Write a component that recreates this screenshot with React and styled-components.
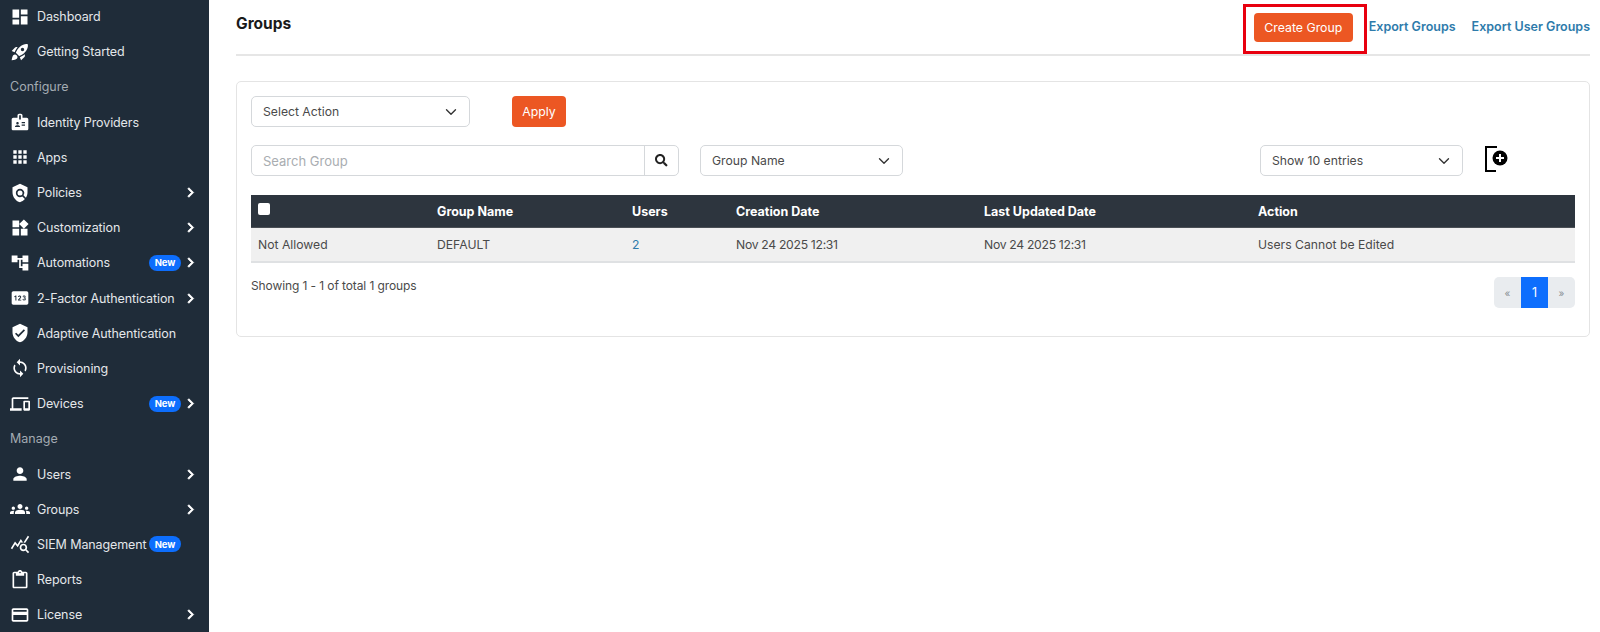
import styled, { createGlobalStyle } from "styled-components";
import {
  MdDashboard, MdRocketLaunch, MdBadge, MdApps, MdPolicy, MdWidgets,
  MdAccountTree, MdPin, MdVerifiedUser, MdSync, MdDevices, MdPerson, MdGroups,
  MdQueryStats, MdOutlineContentPaste, MdOutlineCreditCard, MdChevronRight,
} from "react-icons/md";
import { FaSearch } from "react-icons/fa";

const GlobalStyle = createGlobalStyle`
  html, body { margin: 0; padding: 0; height: 100%; background: #fff; overflow: hidden; }
  body { font-family: "Inter", "Noto Sans", sans-serif; font-size: 12.5px; color: #4a4a4a; }
`;

const Page = styled.div`
  display: flex;
  height: 632px;
  overflow: hidden;
`;

const Sidebar = styled.aside`
  flex: 0 0 209px;
  background: #1f2c39;
  overflow: hidden;
`;

const NavList = styled.nav`
  margin-top: -1px;
  display: flex;
  flex-direction: column;
`;

const NavRow = styled.div`
  height: 35.2px;
  display: flex;
  align-items: center;
  padding: 0 9px 0 10px;
  color: #e4e7ea;
  font-size: 12.5px;
  letter-spacing: -0.1px;
  white-space: nowrap;
`;

const NavIcon = styled.span`
  flex: 0 0 27px;
  display: flex;
  align-items: center;
  color: #fff;
  font-size: 20px;
`;

const NavLabel = styled.span`
  flex: 1;
`;

const SectionLabel = styled.div`
  height: 35.2px;
  display: flex;
  align-items: center;
  padding-left: 10px;
  color: #a3abb2;
  font-size: 12.5px;
`;

const NewBadge = styled.span`
  width: 32px;
  height: 16px;
  border-radius: 8px;
  background: #0d6efd;
  color: #fff;
  font-size: 9.5px;
  font-weight: 700;
  display: flex;
  align-items: center;
  justify-content: center;
`;

const Chevron = styled.span`
  flex: 0 0 19px;
  display: flex;
  justify-content: center;
  color: #fff;
  font-size: 19px;
  svg path:last-child { stroke: #fff; stroke-width: 1; }
`;

const Main = styled.main`
  flex: 1;
  min-width: 0;
  padding: 0 10px 0 27px;
`;

const Header = styled.header`
  height: 56px;
  box-sizing: border-box;
  border-bottom: 2px solid #e6e6e6;
  display: flex;
  align-items: flex-start;
  padding-top: 4px;
`;

const Title = styled.h1`
  margin: 10px auto 0 0;
  font-size: 15.5px;
  font-weight: 700;
  color: #1a1a1a;
`;

const Highlight = styled.div`
  width: 124px;
  height: 50px;
  box-sizing: border-box;
  border: 3px solid #e8000f;
  padding: 6px 0 0 8px;
`;

const OrangeButton = styled.button`
  border: 0;
  border-radius: 4px;
  background: #ec5723;
  color: #fff;
  font: inherit;
  font-size: 12.3px;
  height: ${(p) => p.$h}px;
  width: ${(p) => p.$w}px;
  padding: 0;
`;

const ExportLink = styled.a`
  margin: 15px 0 0 ${(p) => p.$gap}px;
  color: #2e7bab;
  font-size: 12.5px;
  font-weight: 600;
  white-space: nowrap;
`;

const Card = styled.section`
  margin-top: 25px;
  height: 256px;
  box-sizing: border-box;
  border: 1px solid #e4e4e4;
  border-radius: 5px;
  padding: 14px 14px;
`;

const ActionRow = styled.div`
  display: flex;
  gap: 42px;
`;

const FilterRow = styled.div`
  display: flex;
  align-items: center;
  margin-top: 18px;
`;

const SelectBox = styled.div`
  width: ${(p) => p.$w}px;
  height: 31px;
  box-sizing: border-box;
  border: 1px solid #d5d8db;
  border-radius: 5px;
  display: flex;
  align-items: center;
  justify-content: space-between;
  padding: 0 12px 0 11px;
  color: #4a4a4a;
  font-size: 12.2px;
  margin-left: ${(p) => p.$ml || 0}px;
`;

const SelectArrow = styled.svg`
  width: 12px;
  height: 12px;
  fill: none;
  stroke: #333;
  stroke-width: 1.8;
  stroke-linecap: round;
  stroke-linejoin: round;
`;

const SearchGroup = styled.div`
  width: 428px;
  height: 31px;
  box-sizing: border-box;
  border: 1px solid #d5d8db;
  border-radius: 5px;
  display: flex;
`;

const SearchInput = styled.input`
  flex: 1;
  min-width: 0;
  border: 0;
  outline: 0;
  background: transparent;
  padding: 0 11px;
  font: inherit;
  font-size: 13px;
  &::placeholder { color: #a9adb1; }
`;

const SearchButton = styled.div`
  flex: 0 0 33px;
  border-left: 1px solid #d5d8db;
  display: flex;
  align-items: center;
  justify-content: center;
  color: #222;
  font-size: 12.5px;
`;

const AddIcon = styled.svg`
  width: 26px;
  height: 28px;
  margin-left: 21px;
  margin-top: -3px;
`;

const Table = styled.table`
  width: 100%;
  margin-top: 19px;
  border-collapse: collapse;
  table-layout: fixed;
  font-size: 12.2px;
`;

const HeadCell = styled.th`
  height: 32px;
  padding: 0 0 0 7px;
  background: #2d353e;
  color: #fff;
  font-size: 12.5px;
  font-weight: 700;
  text-align: left;
  border-bottom: 1px solid #4a4f55;
`;

const Cell = styled.td`
  height: 33px;
  padding: 0 0 0 7px;
  background: #f0f0f0;
  color: #4a4a4a;
  border-bottom: 2px solid #dfe1e3;
  letter-spacing: ${(p) => (p.$date ? "-0.3px" : "0")};
`;

const CheckBox = styled.span`
  display: block;
  width: 12px;
  height: 12px;
  border-radius: 2px;
  background: #fff;
  margin-top: -4px;
`;

const UserLink = styled.a`
  color: #2e7bab;
`;

const Footer = styled.div`
  display: flex;
  justify-content: space-between;
  align-items: flex-start;
  margin-top: 14px;
`;

const ShowingText = styled.span`
  margin-top: 1px;
  font-size: 12px;
  letter-spacing: -0.1px;
`;

const Pager = styled.div`
  display: flex;
  height: 31px;
  border-radius: 5px;
  overflow: hidden;
  background: #e9ecef;
`;

const PageItem = styled.span`
  width: 27px;
  display: flex;
  align-items: center;
  justify-content: center;
  background: ${(p) => (p.$active ? "#0d6efd" : "transparent")};
  color: ${(p) => (p.$active ? "#fff" : "#8a8f95")};
  font-size: ${(p) => (p.$active ? 12.5 : 10)}px;
`;

const navItems = [
  { icon: MdDashboard, label: "Dashboard" },
  { icon: MdRocketLaunch, label: "Getting Started" },
  { section: "Configure" },
  { icon: MdBadge, label: "Identity Providers" },
  { icon: MdApps, label: "Apps" },
  { icon: MdPolicy, label: "Policies", more: true },
  { icon: MdWidgets, label: "Customization", more: true },
  { icon: MdAccountTree, label: "Automations", badge: true, more: true },
  { icon: MdPin, label: "2-Factor Authentication", more: true },
  { icon: MdVerifiedUser, label: "Adaptive Authentication" },
  { icon: MdSync, label: "Provisioning" },
  { icon: MdDevices, label: "Devices", badge: true, more: true },
  { section: "Manage" },
  { icon: MdPerson, label: "Users", more: true },
  { icon: MdGroups, label: "Groups", more: true },
  { icon: MdQueryStats, label: "SIEM Management", badge: true },
  { icon: MdOutlineContentPaste, label: "Reports" },
  { icon: MdOutlineCreditCard, label: "License", more: true },
];

const Arrow = () => (
  <SelectArrow viewBox="0 0 16 16">
    <path d="M2 5l6 6 6-6" />
  </SelectArrow>
);

export default function App() {
  return (
    <>
      <GlobalStyle />
      <Page>
        <Sidebar>
          <NavList>
            {navItems.map((item) =>
              item.section ? (
                <SectionLabel key={item.section}>{item.section}</SectionLabel>
              ) : (
                <NavRow key={item.label}>
                  <NavIcon><item.icon /></NavIcon>
                  <NavLabel>{item.label}</NavLabel>
                  {item.badge && <NewBadge>New</NewBadge>}
                  <Chevron>{item.more && <MdChevronRight />}</Chevron>
                </NavRow>
              )
            )}
          </NavList>
        </Sidebar>
        <Main>
          <Header>
            <Title>Groups</Title>
            <Highlight>
              <OrangeButton $w={99} $h={29}>Create Group</OrangeButton>
            </Highlight>
            <ExportLink $gap={2}>Export Groups</ExportLink>
            <ExportLink $gap={16}>Export User Groups</ExportLink>
          </Header>
          <Card>
            <ActionRow>
              <SelectBox $w={219}>Select Action <Arrow /></SelectBox>
              <OrangeButton $w={54} $h={31}>Apply</OrangeButton>
            </ActionRow>
            <FilterRow>
              <SearchGroup>
                <SearchInput placeholder="Search Group" />
                <SearchButton><FaSearch /></SearchButton>
              </SearchGroup>
              <SelectBox $w={203} $ml={21}>Group Name <Arrow /></SelectBox>
              <SelectBox $w={203} $ml={357}>Show 10 entries <Arrow /></SelectBox>
              <AddIcon viewBox="0 0 26 28">
                <path d="M13 2H2v24h10" fill="none" stroke="#000" strokeWidth="2" />
                <circle cx="16" cy="13" r="7.5" fill="#000" />
                <path d="M16 9v8M12 13h8" stroke="#fff" strokeWidth="2" />
              </AddIcon>
            </FilterRow>
            <Table>
              <colgroup>
                <col style={{ width: 179 }} />
                <col style={{ width: 195 }} />
                <col style={{ width: 104 }} />
                <col style={{ width: 248 }} />
                <col style={{ width: 274 }} />
                <col />
              </colgroup>
              <thead>
                <tr>
                  <HeadCell><CheckBox /></HeadCell>
                  <HeadCell>Group Name</HeadCell>
                  <HeadCell>Users</HeadCell>
                  <HeadCell>Creation Date</HeadCell>
                  <HeadCell>Last Updated Date</HeadCell>
                  <HeadCell>Action</HeadCell>
                </tr>
              </thead>
              <tbody>
                <tr>
                  <Cell>Not Allowed</Cell>
                  <Cell>DEFAULT</Cell>
                  <Cell><UserLink>2</UserLink></Cell>
                  <Cell $date>Nov 24 2025 12:31</Cell>
                  <Cell $date>Nov 24 2025 12:31</Cell>
                  <Cell>Users Cannot be Edited</Cell>
                </tr>
              </tbody>
            </Table>
            <Footer>
              <ShowingText>Showing 1 - 1 of total 1 groups</ShowingText>
              <Pager>
                <PageItem>«</PageItem>
                <PageItem $active>1</PageItem>
                <PageItem>»</PageItem>
              </Pager>
            </Footer>
          </Card>
        </Main>
      </Page>
    </>
  );
}
